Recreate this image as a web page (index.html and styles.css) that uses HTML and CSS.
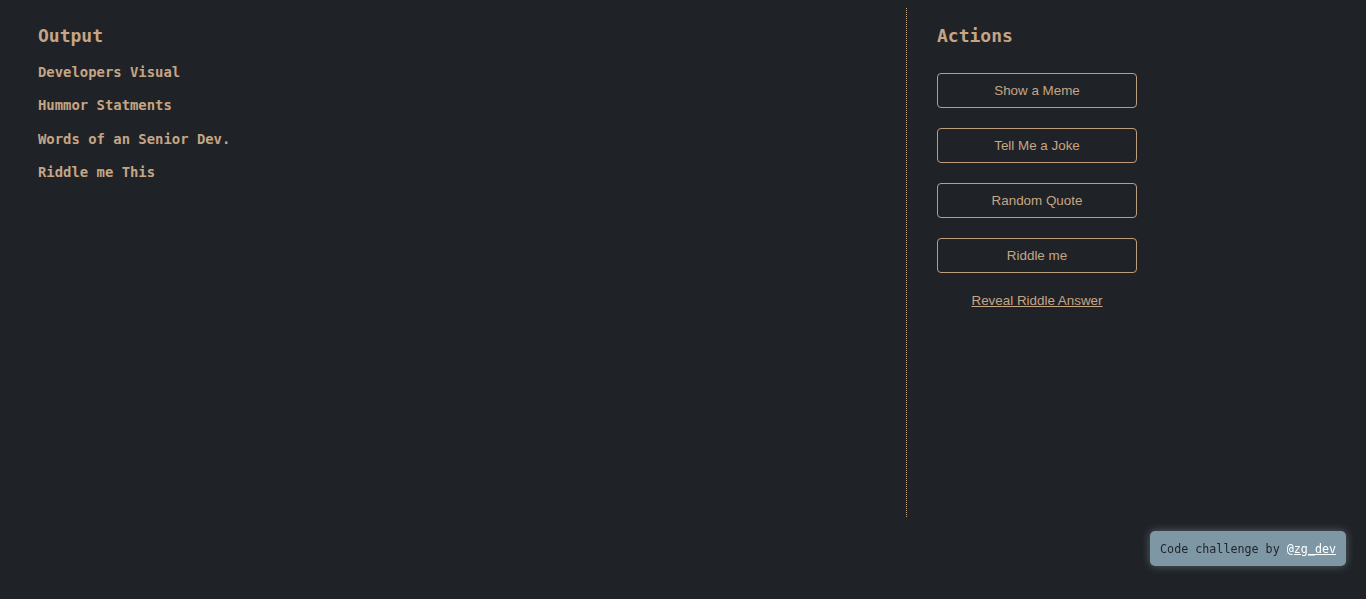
FILE: index.html
```html
<!DOCTYPE html>
<html>
<head>
<meta charset="utf-8">
<link rel="stylesheet" href="styles.css">
</head>
<body>
<div class="layout">
  <section class="output">
    <h2 class="title">Output</h2>
    <ul class="list">
      <li>Developers Visual</li>
      <li>Hummor Statments</li>
      <li>Words of an Senior Dev.</li>
      <li>Riddle me This</li>
    </ul>
  </section>
  <section class="actions">
    <h2 class="title">Actions</h2>
    <div class="buttons">
      <button class="btn">Show a Meme</button>
      <button class="btn">Tell Me a Joke</button>
      <button class="btn">Random Quote</button>
      <button class="btn">Riddle me</button>
      <a class="reveal" href="#">Reveal Riddle Answer</a>
    </div>
  </section>
</div>
<div class="badge">Code challenge by <a href="#">@zg_dev</a></div>
</body>
</html>
```
FILE: styles.css
```css
html, body {
  margin: 0;
  background: #1f2328;
}
body {
  padding: 8px;
  color: #c6a585;
  font-family: "DejaVu Sans Mono", "Liberation Mono", monospace;
}
.layout {
  display: flex;
  height: 85vh;
}
.output {
  width: 899px;
  box-sizing: border-box;
  padding: 0 30px;
  border-right: 1px dotted #c6a585;
}
.actions {
  flex: 1;
  padding: 0 30px;
}
.title {
  margin: 17px 0 0;
  font-size: 18px;
  line-height: 22px;
  font-weight: bold;
}
.list {
  list-style: none;
  margin: 17px 0 0;
  padding: 0;
  font-size: 13.9px;
  font-weight: bold;
}
.list li {
  line-height: 16px;
  margin-bottom: 17.3px;
}
.buttons {
  display: flex;
  flex-direction: column;
  width: 200px;
  margin-top: 26px;
  gap: 20px;
}
.btn {
  height: 35px;
  background: transparent;
  border: 1px solid #bf9c7c;
  border-radius: 4px;
  color: #c6a585;
  font-family: "Liberation Sans", Arial, sans-serif;
  font-size: 13.4px;
  padding: 0;
}
.reveal {
  margin-top: 0;
  text-align: center;
  color: #c6a585;
  font-family: "Liberation Sans", Arial, sans-serif;
  font-size: 13.4px;
}
.badge {
  position: fixed;
  right: 20px;
  bottom: 33px;
  height: 35px;
  box-sizing: border-box;
  padding: 0 10px;
  display: flex;
  align-items: center;
  background: #7d97a5;
  color: #1f2328;
  border-radius: 5px;
  box-shadow: 0 0 8px rgba(200, 215, 225, 0.35);
  font-family: "DejaVu Sans Mono", "Liberation Mono", monospace;
  font-size: 11.7px;
  white-space: pre;
}
.badge a {
  color: #ffffff;
}
```
